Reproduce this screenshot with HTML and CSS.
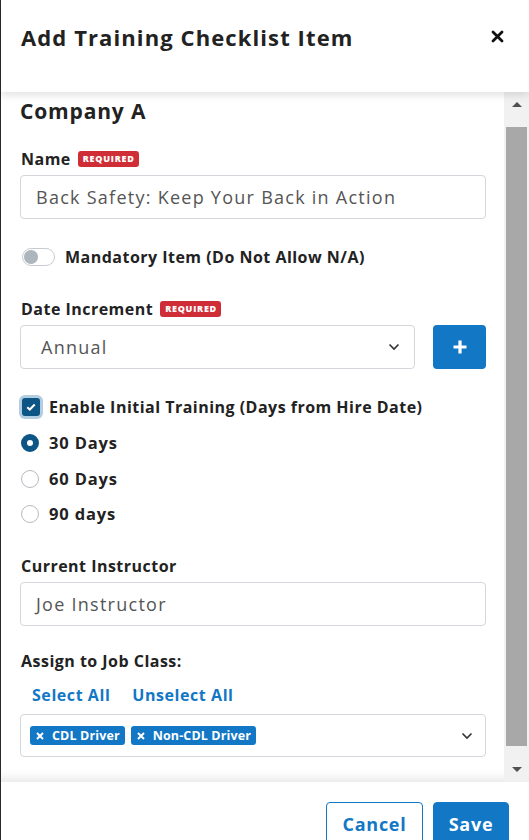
FILE: index.html
```html
<!DOCTYPE html>
<html>
<head>
<meta charset="utf-8">
<link rel="stylesheet" href="styles.css">
</head>
<body>
<div class="modal">
  <header class="modal-header">
    <h1 class="title">Add Training Checklist Item</h1>
    <button class="close" aria-label="Close">
      <svg width="13" height="13" viewBox="0 0 13 13"><path d="M2 2L11 11M11 2L2 11" stroke="#111" stroke-width="2.8" stroke-linecap="round"/></svg>
    </button>
  </header>
  <div class="modal-body">
    <div class="content">
      <h2 class="company">Company A</h2>

      <div class="label-row"><span class="label">Name</span><span class="badge">REQUIRED</span></div>
      <div class="input">Back Safety: Keep Your Back in Action</div>

      <div class="toggle-row">
        <span class="switch"><span class="knob"></span></span>
        <span class="label">Mandatory Item (Do Not Allow N/A)</span>
      </div>

      <div class="label-row lr-date"><span class="label">Date Increment</span><span class="badge">REQUIRED</span></div>
      <div class="select-row">
        <div class="input select"><span class="sel-text">Annual</span>
          <svg class="chev" width="12" height="8" viewBox="0 0 12 8"><path d="M1.5 1.5L6 6L10.5 1.5" fill="none" stroke="#333" stroke-width="1.6"/></svg>
        </div>
        <button class="plus">
          <svg width="16" height="16" viewBox="0 0 16 16"><path d="M8 1.5V14.5M1.5 8H14.5" stroke="#fff" stroke-width="3.2"/></svg>
        </button>
      </div>

      <div class="check-row">
        <span class="checkbox">
          <svg width="10" height="8" viewBox="0 0 10 8"><path d="M1.3 4.2L3.8 6.5L8.7 1.5" fill="none" stroke="#fff" stroke-width="2"/></svg>
        </span>
        <span class="label">Enable Initial Training (Days from Hire Date)</span>
      </div>

      <div class="radios">
        <div class="radio-row"><span class="radio on"></span><span class="label rl">30 Days</span></div>
        <div class="radio-row"><span class="radio"></span><span class="label rl">60 Days</span></div>
        <div class="radio-row"><span class="radio"></span><span class="label rl">90 days</span></div>
      </div>

      <div class="label-row lr-instr"><span class="label">Current Instructor</span></div>
      <div class="input">Joe Instructor</div>

      <div class="label-row lr-assign"><span class="label">Assign to Job Class:</span></div>
      <div class="links"><a class="link">Select All</a><a class="link">Unselect All</a></div>
      <div class="input multi">
        <span class="tag"><svg class="tx" width="8" height="8" viewBox="0 0 8 8"><path d="M1 1L7 7M7 1L1 7" stroke="#fff" stroke-width="2"/></svg>CDL Driver</span>
        <span class="tag"><svg class="tx" width="8" height="8" viewBox="0 0 8 8"><path d="M1 1L7 7M7 1L1 7" stroke="#fff" stroke-width="2"/></svg>Non-CDL Driver</span>
        <svg class="chev" width="12" height="8" viewBox="0 0 12 8"><path d="M1.5 1.5L6 6L10.5 1.5" fill="none" stroke="#333" stroke-width="1.6"/></svg>
      </div>
    </div>
    <div class="scrollbar">
      <span class="sb-btn"><span class="arrow up"></span></span>
      <span class="thumb"></span>
      <span class="sb-btn"><span class="arrow down"></span></span>
    </div>
  </div>
  <footer class="modal-footer">
    <button class="btn btn-outline">Cancel</button>
    <button class="btn btn-primary">Save</button>
  </footer>
</div>
</body>
</html>
```

FILE: styles.css
```css
* { box-sizing: border-box; }
html, body { margin: 0; height: 100%; }
body {
  background: #2a2a2a;
  font-family: "Open Sans", "Liberation Sans", sans-serif;
  color: #222;
  overflow: hidden;
}
.modal {
  margin-left: 1px;
  height: 840px;
  background: #fff;
  border-top-left-radius: 4px;
  display: flex;
  flex-direction: column;
}
.modal-header {
  height: 92px;
  flex: none;
  display: flex;
  align-items: flex-start;
  justify-content: space-between;
  padding: 22px 25px 0 20px;
  position: relative;
  z-index: 2;
  box-shadow: 0 3px 8px rgba(0,0,0,0.12);
  background: #fff;
}
.title {
  margin: 0;
  font-size: 22px;
  line-height: 30px;
  font-weight: 700;
  letter-spacing: 0.05em;
  color: #222;
}
.close {
  border: 0;
  background: none;
  padding: 0;
  margin-top: 8px;
  width: 13px;
  height: 13px;
  display: flex;
}
.modal-body {
  flex: 1;
  display: flex;
  min-height: 0;
  box-shadow: inset 0 -14px 12px -12px rgba(0,0,0,0.12);
}
.content {
  flex: 1;
  padding: 6px 18px 0 19px;
  display: flex;
  flex-direction: column;
}
.company {
  margin: 0;
  font-size: 21px;
  line-height: 26px;
  font-weight: 700;
  letter-spacing: 0.04em;
  color: #222;
}
.label {
  font-size: 16px;
  font-weight: 700;
  color: #222;
  line-height: 20px;
  letter-spacing: 0.03em;
}
.label.rl {
  font-size: 16.5px;
  letter-spacing: 0.05em;
}
.label-row {
  display: flex;
  align-items: center;
  gap: 7px;
  height: 20px;
  margin-top: 25px;
  padding-left: 1px;
}
.badge {
  background: #cf2e37;
  color: #fff;
  font-size: 9px;
  font-weight: 800;
  line-height: 16px;
  height: 16px;
  padding: 0 4px 0 5px;
  border-radius: 3px;
  letter-spacing: 0.75px;
}
.input {
  margin-top: 6px;
  height: 44px;
  border: 1px solid #d3d6da;
  border-radius: 4px;
  padding: 0 15px;
  display: flex;
  align-items: center;
  font-size: 18px;
  letter-spacing: 0.07em;
  color: #555;
}
.toggle-row {
  display: flex;
  align-items: center;
  gap: 10px;
  margin-top: 28px;
  height: 20px;
  padding-left: 2px;
}
.switch {
  width: 33px;
  height: 18px;
  border: 1px solid #c8ccd0;
  border-radius: 9px;
  display: flex;
  align-items: center;
  padding-left: 1px;
}
.knob {
  width: 14px;
  height: 14px;
  border-radius: 50%;
  background: #adb5bd;
}
.lr-date { margin-top: 32px; }
.select-row {
  display: flex;
  gap: 18px;
  margin-top: 6px;
}
.select-row .input { margin-top: 0; flex: 1; }
.select {
  justify-content: space-between;
  padding: 0 14px 0 20px;
}
.sel-text { color: #555; }
.plus {
  width: 53px;
  height: 44px;
  border: 0;
  border-radius: 4px;
  background: #1277c5;
  display: flex;
  align-items: center;
  justify-content: center;
  padding: 0;
}
.check-row {
  display: flex;
  align-items: center;
  gap: 9px;
  margin-top: 26px;
  height: 24px;
}
.checkbox {
  width: 18px;
  height: 18px;
  margin-left: 2px;
  border-radius: 3px;
  background: #0d5584;
  box-shadow: 0 0 0 3px #b3cde0;
  display: flex;
  align-items: center;
  justify-content: center;
}
.radios {
  display: flex;
  flex-direction: column;
  margin-top: 14px;
  gap: 15.5px;
}
.radio-row {
  display: flex;
  align-items: center;
  gap: 10px;
  height: 20px;
  padding-left: 1px;
}
.radio {
  width: 18px;
  height: 18px;
  border-radius: 50%;
  border: 1px solid #b5bac0;
  background: #fff;
}
.radio.on {
  border: 6px solid #0d5584;
  background: #fff;
}
.lr-instr { margin-top: 32px; }
.lr-assign { margin-top: 25px; }
.links {
  display: flex;
  gap: 22px;
  margin-top: 14px;
  height: 20px;
  align-items: center;
  padding-left: 12px;
}
.link {
  color: #1277c5;
  font-size: 16px;
  font-weight: 700;
  letter-spacing: 0.035em;
}
.multi {
  margin-top: 9px;
  height: 43px;
  padding: 0 12px 0 9px;
  gap: 6px;
  letter-spacing: 0;
}
.multi .chev { margin-left: auto; }
.tag {
  background: #1277c5;
  color: #fff;
  font-size: 12.5px;
  font-weight: 700;
  letter-spacing: 0.01em;
  height: 19px;
  line-height: 19px;
  border-radius: 3px;
  padding: 0 5px 0 6px;
  display: flex;
  align-items: center;
}
.tx {
  margin-right: 8px;
  flex: none;
}
.scrollbar {
  width: 25px;
  flex: none;
  background: #f1f1f1;
  display: flex;
  flex-direction: column;
  align-items: center;
}
.sb-btn {
  height: 25px;
  width: 25px;
  flex: none;
  display: flex;
  align-items: center;
  justify-content: center;
}
.arrow {
  width: 0;
  height: 0;
  border-left: 5px solid transparent;
  border-right: 5px solid transparent;
}
.arrow.up { border-bottom: 5px solid #505050; }
.arrow.down { border-top: 5px solid #505050; }
.thumb {
  width: 21px;
  flex: 1;
  background: #a8a8a8;
  margin: 10px 0 11px;
}
.modal-footer {
  height: 58px;
  flex: none;
  display: flex;
  justify-content: flex-end;
  align-items: flex-start;
  gap: 10px;
  padding: 20px 20px 0 0;
}
.btn {
  height: 44px;
  border-radius: 4px;
  font-family: inherit;
  font-size: 18px;
  font-weight: 700;
  letter-spacing: 0.04em;
  padding: 0;
}
.btn-outline {
  width: 97px;
  background: #fff;
  border: 1px solid #1277c5;
  color: #1277c5;
}
.btn-primary {
  width: 76px;
  background: #1277c5;
  border: 1px solid #1277c5;
  color: #fff;
}
```
